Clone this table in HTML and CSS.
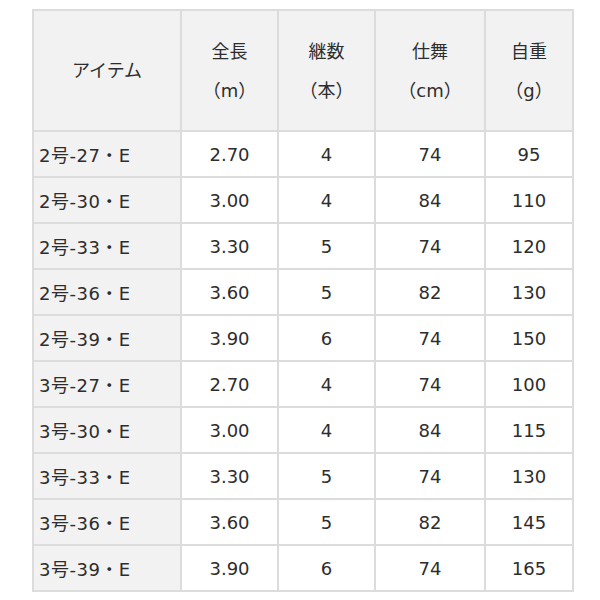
FILE: index.html
```html
<!DOCTYPE html>
<html lang="ja">
<head>
<meta charset="utf-8">
<link rel="stylesheet" href="styles.css">
</head>
<body>
<table class="spec">
<colgroup>
<col class="c1"><col class="c2"><col class="c3"><col class="c4"><col class="c5">
</colgroup>
<thead>
<tr>
<th>アイテム</th>
<th>全長<br>（m）</th>
<th>継数<br>（本）</th>
<th>仕舞<br>（cm）</th>
<th>自重<br>（g）</th>
</tr>
</thead>
<tbody>
<tr><th>2号-27・E</th><td>2.70</td><td>4</td><td>74</td><td>95</td></tr>
<tr><th>2号-30・E</th><td>3.00</td><td>4</td><td>84</td><td>110</td></tr>
<tr><th>2号-33・E</th><td>3.30</td><td>5</td><td>74</td><td>120</td></tr>
<tr><th>2号-36・E</th><td>3.60</td><td>5</td><td>82</td><td>130</td></tr>
<tr><th>2号-39・E</th><td>3.90</td><td>6</td><td>74</td><td>150</td></tr>
<tr><th>3号-27・E</th><td>2.70</td><td>4</td><td>74</td><td>100</td></tr>
<tr><th>3号-30・E</th><td>3.00</td><td>4</td><td>84</td><td>115</td></tr>
<tr><th>3号-33・E</th><td>3.30</td><td>5</td><td>74</td><td>130</td></tr>
<tr><th>3号-36・E</th><td>3.60</td><td>5</td><td>82</td><td>145</td></tr>
<tr><th>3号-39・E</th><td>3.90</td><td>6</td><td>74</td><td>165</td></tr>
</tbody>
</table>
</body>
</html>
```
FILE: styles.css
```css
html, body {
  margin: 0;
  padding: 0;
  background: #fff;
}
body {
  padding: 9px 0 0 32px;
  font-family: "DejaVu Sans", "Noto Sans CJK JP", sans-serif;
  color: #2d2d2d;
}
.spec {
  border-collapse: collapse;
  table-layout: fixed;
  width: 540px;
  font-size: 18px;
}
.c1 { width: 148px; }
.c2 { width: 97px; }
.c3 { width: 97px; }
.c4 { width: 110px; }
.c5 { width: 88px; }
.spec th, .spec td {
  border: 2px solid #dcdcdc;
  padding: 0;
  font-weight: normal;
  text-align: center;
  vertical-align: middle;
}
.spec thead th {
  background: #f2f2f2;
  height: 119px;
  line-height: 39px;
}
.spec tbody th {
  background: #f2f2f2;
  text-align: left;
  padding-left: 5px;
  letter-spacing: 0.5px;
  white-space: nowrap;
}
.spec tbody tr {
  height: 46px;
}
.spec tbody td {
  background: #fff;
}
```
